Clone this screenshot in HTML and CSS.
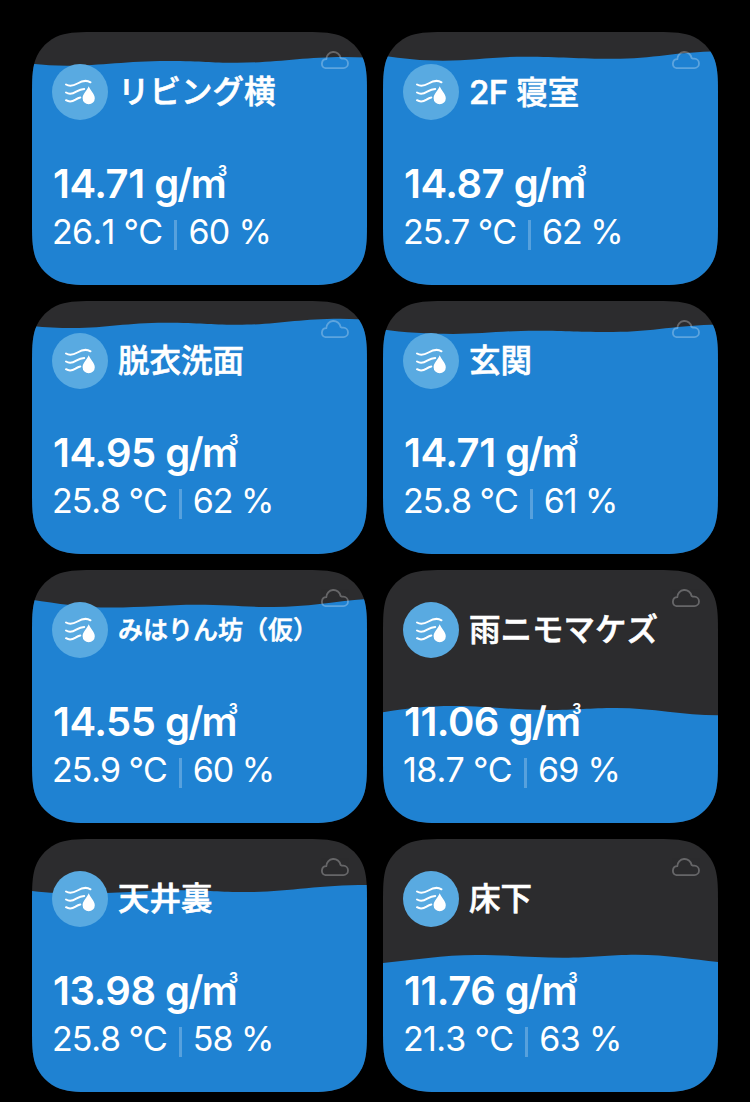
FILE: index.html
```html
<!DOCTYPE html>
<html lang="ja">

<head>
  <meta charset="UTF-8" />
  <meta name="viewport" content="width=device-width, initial-scale=1.0" />
  <title>絶対湿度</title>
  <link rel="stylesheet" href="styles.css">
</head>

<body>
  <!-- shared icons -->
  <svg class="sprite">
    <symbol id="icon-humidity" viewBox="0 0 56 56">
      <g fill="none" stroke="#fff" stroke-width="2" stroke-linecap="round">
        <path d="M14 20.500c3.500 2.300 7.500 1.300 11.500-1 4.500-2.700 9-3.700 13-1.200" />
        <path d="M14 28.500c3.300 2 6.800 1.200 10.200-.9 2.800-1.700 5-2.700 8-2.700" />
        <path d="M14 36.200c3.200 2 6.500 1.300 9.500-.6 1.800-1.200 3.200-1.900 4.800-2.200" />
      </g>
      <path fill="#fff" d="M36.700 22.300c1.200 3.600 6.100 7.500 6.100 11.900a6.100 6.100 0 0 1-12.200 0c0-4.400 4.900-8.300 6.100-11.900z" />
    </symbol>
    <symbol id="icon-cloud" viewBox="0 0 29 20">
      <path fill="none" stroke="#fff" stroke-width="1.800" stroke-linejoin="round" d="M5.500 18.100H23.300A4.700 4.700 0 0 0 23.300 8.700C22.300 8.700 21.400 8.500 20.600 8A7.200 7.200 0 0 0 6.300 9.200A4.500 4.500 0 0 0 5.500 18.100z" />
    </symbol>
  </svg>

  <div class="container">
    <div class="card">
      <svg class="water" viewBox="0 0 335 253"><path d="M0 31.700C12 33 22 33.700 35 33.700C70 33.700 95 29 135 29S175 30.800 205 30.800C245 30.800 270 25 312 25L335 25.400V253H0z" /></svg>
      <svg class="cloud"><use href="#icon-cloud" /></svg>
      <div class="header">
        <svg class="badge"><use href="#icon-humidity" /></svg>
        <h2 class="name">リビング横</h2>
      </div>
      <div class="value">14.71 <span class="unit">g/m<sup>3</sup></span></div>
      <div class="details loose"><span>26.1 °C</span><i class="divider"></i><span>60 %</span></div>
    </div>

    <div class="card">
      <svg class="water" viewBox="0 0 335 253"><path d="M0 23.800C20 26.800 38 28.700 60 28.700C90 28.700 110 24.700 143 24.700S195 26.800 230 26.800C270 26.800 295 19.400 335 19.400V253H0z" /></svg>
      <svg class="cloud"><use href="#icon-cloud" /></svg>
      <div class="header">
        <svg class="badge"><use href="#icon-humidity" /></svg>
        <h2 class="name"><span class="latin">2F</span> 寝室</h2>
      </div>
      <div class="value">14.87 <span class="unit">g/m<sup>3</sup></span></div>
      <div class="details"><span>25.7 °C</span><i class="divider"></i><span>62 %</span></div>
    </div>

    <div class="card">
      <svg class="water" viewBox="0 0 335 253"><path d="M0 25C14 26.400 26 27 41 27C75 27 95 21.800 133 21.800S175 23.800 205 23.800C245 23.800 265 17.700 308 17.700L335 18.500V253H0z" /></svg>
      <svg class="cloud"><use href="#icon-cloud" /></svg>
      <div class="header">
        <svg class="badge"><use href="#icon-humidity" /></svg>
        <h2 class="name">脱衣洗面</h2>
      </div>
      <div class="value">14.95 <span class="unit">g/m<sup>3</sup></span></div>
      <div class="details"><span>25.8 °C</span><i class="divider"></i><span>62 %</span></div>
    </div>

    <div class="card">
      <svg class="water" viewBox="0 0 335 253"><path d="M0 28.600C20 31.600 45 33 70 33C100 33 120 29.700 153 29.700S195 31 230 31C270 31 295 23.800 335 23.800V253H0z" /></svg>
      <svg class="cloud"><use href="#icon-cloud" /></svg>
      <div class="header">
        <svg class="badge"><use href="#icon-humidity" /></svg>
        <h2 class="name">玄関</h2>
      </div>
      <div class="value">14.71 <span class="unit">g/m<sup>3</sup></span></div>
      <div class="details"><span>25.8 °C</span><i class="divider"></i><span>61 %</span></div>
    </div>

    <div class="card">
      <svg class="water" viewBox="0 0 335 253"><path d="M0 29.700C25 33.500 50 37.600 80 37.600S135 34.800 165 34.800S212 37 242 37C275 37 300 31.500 335 29V253H0z" /></svg>
      <svg class="cloud"><use href="#icon-cloud" /></svg>
      <div class="header">
        <svg class="badge"><use href="#icon-humidity" /></svg>
        <h2 class="name name-long">みはりん坊（仮）</h2>
      </div>
      <div class="value">14.55 <span class="unit">g/m<sup>3</sup></span></div>
      <div class="details"><span>25.9 °C</span><i class="divider"></i><span>60 %</span></div>
    </div>

    <div class="card">
      <svg class="water" viewBox="0 0 335 253"><path d="M0 142.300C25 138 45 136 70 136C105 136 130 140 163 140S205 138 233 138C270 138 300 145.300 335 145.300V253H0z" /></svg>
      <svg class="cloud"><use href="#icon-cloud" /></svg>
      <div class="header">
        <svg class="badge"><use href="#icon-humidity" /></svg>
        <h2 class="name">雨ニモマケズ</h2>
      </div>
      <div class="value">11.06 <span class="unit">g/m<sup>3</sup></span></div>
      <div class="details loose"><span>18.7 °C</span><i class="divider"></i><span>69 %</span></div>
    </div>

    <div class="card">
      <svg class="water" viewBox="0 0 335 253"><path d="M0 52C18 54 30 54.600 50 54.600C85 54.600 110 51.200 145 51.200S185 53 215 53C255 53 285 46 335 46V253H0z" /></svg>
      <svg class="cloud"><use href="#icon-cloud" /></svg>
      <div class="header">
        <svg class="badge"><use href="#icon-humidity" /></svg>
        <h2 class="name">天井裏</h2>
      </div>
      <div class="value">13.98 <span class="unit">g/m<sup>3</sup></span></div>
      <div class="details"><span>25.8 °C</span><i class="divider"></i><span>58 %</span></div>
    </div>

    <div class="card">
      <svg class="water" viewBox="0 0 335 253"><path d="M0 124C30 121 60 116 93 116S150 118.700 180 118.700S225 115.700 253 115.700C285 115.700 310 120.500 335 123V253H0z" /></svg>
      <svg class="cloud"><use href="#icon-cloud" /></svg>
      <div class="header">
        <svg class="badge"><use href="#icon-humidity" /></svg>
        <h2 class="name">床下</h2>
      </div>
      <div class="value">11.76 <span class="unit">g/m<sup>3</sup></span></div>
      <div class="details loose"><span>21.3 °C</span><i class="divider"></i><span>63 %</span></div>
    </div>
  </div>
</body>

</html>
```
FILE: styles.css
```css
* {
  padding: 0;
  margin: 0;
  box-sizing: border-box;
}

body {
  background-color: #000;
  color: #fff;
  font-family: Inter, "Noto Sans CJK JP", sans-serif;
}

.sprite {
  display: none;
}

.container {
  display: grid;
  grid-template-columns: 335px 335px;
  grid-auto-rows: 253px;
  gap: 16px;
  padding: 32px 32px 10px;
}

.card {
  position: relative;
  display: flex;
  flex-direction: column;
  padding: 32px 20px 0;
  background-color: #2c2c2e;
  /* continuous corners */
  clip-path: path("M67 0H268C287 0 297 0 307 3.300C318.500 7.500 327.500 16.500 331.700 28C335 38 335 48 335 67V186C335 205 335 215 331.700 225C327.500 236.500 318.500 245.500 307 249.700C297 253 287 253 268 253H67C48 253 38 253 28 249.700C16.500 245.500 7.500 236.500 3.300 225C0 215 0 205 0 186V67C0 48 0 38 3.300 28C7.500 16.500 16.500 7.500 28 3.300C38 0 48 0 67 0Z");
}

.water {
  position: absolute;
  inset: 0;
  width: 335px;
  height: 253px;
  fill: #1f82d2;
}

.cloud {
  position: absolute;
  top: 18px;
  right: 18px;
  width: 29px;
  height: 20px;
  opacity: 0.28;
}

.header {
  position: relative;
  display: flex;
  align-items: center;
  gap: 10px;
  height: 56px;
}

.badge {
  width: 56px;
  height: 56px;
  border-radius: 50%;
  background-color: #59aae1;
}

.name {
  font-size: 31.500px;
  font-weight: 500;
  line-height: 56px;
  white-space: nowrap;
  -webkit-text-stroke: 0.600px #fff;
}

.name-long {
  font-size: 25px;
}

.latin {
  font-size: 33px;
  letter-spacing: -0.5px;
}

.value {
  position: relative;
  margin-top: 40px;
  padding-left: 1px;
  font-size: 40px;
  font-weight: 600;
  letter-spacing: -0.5px;
  line-height: 48px;
  white-space: nowrap;
}

.unit {
  letter-spacing: -1.800px;
}

/* the 3 sits on the shoulder of the m */
.unit sup {
  display: inline-block;
  width: 9px;
  margin-left: -7px;
  font-size: 14px;
  font-weight: 700;
  letter-spacing: 0;
  line-height: 14px;
  vertical-align: 22px;
}

.details {
  position: relative;
  display: flex;
  align-items: center;
  height: 48px;
  font-size: 34px;
  font-kerning: none;
  letter-spacing: -1.050px;
  line-height: 48px;
  white-space: nowrap;
}

/* evens out rows with a narrow 1 in the temperature */
.loose {
  letter-spacing: -0.700px;
}

.divider {
  width: 3px;
  height: 30px;
  margin: 6px 11px 0 12px;
  background-color: rgba(255, 255, 255, 0.25);
}
```
